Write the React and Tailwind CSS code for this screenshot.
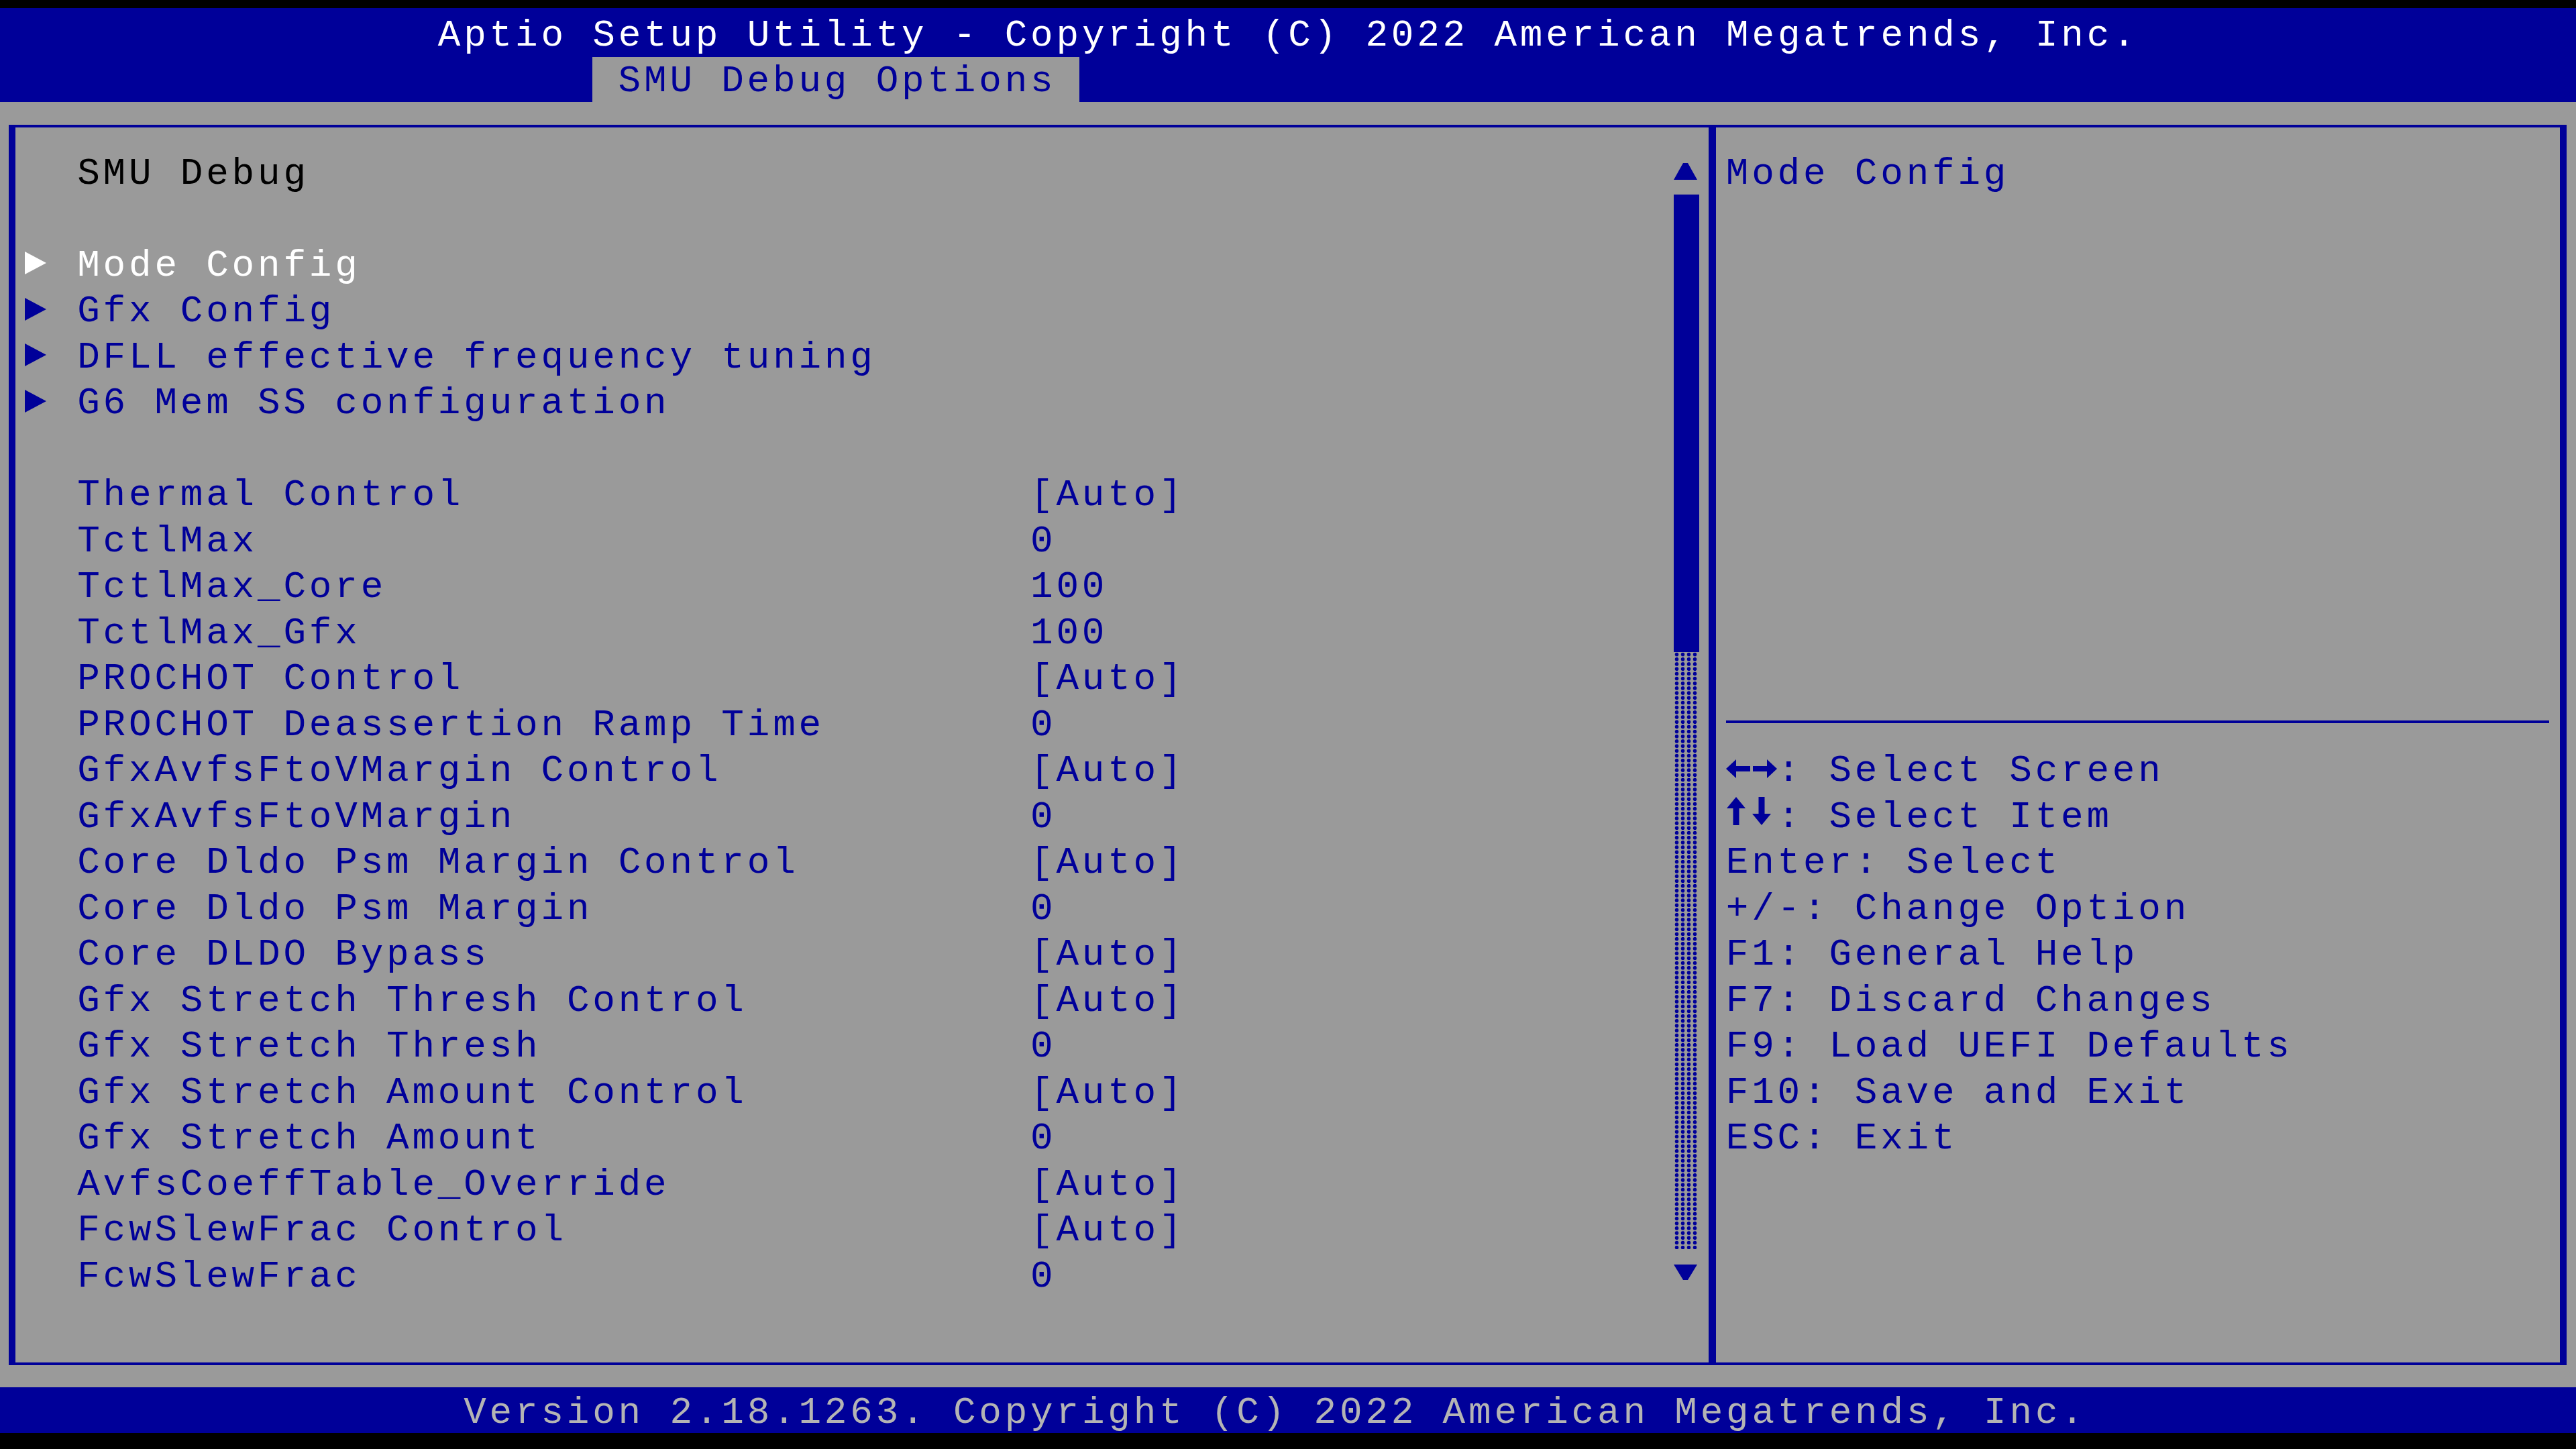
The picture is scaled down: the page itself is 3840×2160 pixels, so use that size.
const BLUE = '#000099';

const submenus = ['Mode Config', 'Gfx Config', 'DFLL effective frequency tuning', 'G6 Mem SS configuration'];

const settings = [
  ['Thermal Control', '[Auto]'],
  ['TctlMax', '0'],
  ['TctlMax_Core', '100'],
  ['TctlMax_Gfx', '100'],
  ['PROCHOT Control', '[Auto]'],
  ['PROCHOT Deassertion Ramp Time', '0'],
  ['GfxAvfsFtoVMargin Control', '[Auto]'],
  ['GfxAvfsFtoVMargin', '0'],
  ['Core Dldo Psm Margin Control', '[Auto]'],
  ['Core Dldo Psm Margin', '0'],
  ['Core DLDO Bypass', '[Auto]'],
  ['Gfx Stretch Thresh Control', '[Auto]'],
  ['Gfx Stretch Thresh', '0'],
  ['Gfx Stretch Amount Control', '[Auto]'],
  ['Gfx Stretch Amount', '0'],
  ['AvfsCoeffTable_Override', '[Auto]'],
  ['FcwSlewFrac Control', '[Auto]'],
  ['FcwSlewFrac', '0'],
];

const helpKeys = [
  ['Enter:', 'Select'],
  ['+/-:', 'Change Option'],
  ['F1:', 'General Help'],
  ['F7:', 'Discard Changes'],
  ['F9:', 'Load UEFI Defaults'],
  ['F10:', 'Save and Exit'],
  ['ESC:', 'Exit'],
];

function Pointer({ selected }) {
  return (
    <svg width="32" height="34" viewBox="0 0 32 34" className="mb-[7px]">
      <polygon points="0,0 32,17 0,34" fill={selected ? '#ffffff' : BLUE} />
    </svg>
  );
}

function MenuRow({ label, value, submenu, selected, dark }) {
  const color = selected ? 'text-white' : dark ? 'text-black' : 'text-[#000099]';
  return (
    <div className={`flex items-center h-[68.5px] leading-[68.5px] ${color}`}>
      <div className="w-[92.2px] shrink-0 flex items-center pl-[14px]">
        {submenu && <Pointer selected={selected} />}
      </div>
      <span className="w-[1420.8px] shrink-0 whitespace-pre">{label}</span>
      {value && <span>{value}</span>}
    </div>
  );
}

function ScrollBar() {
  return (
    <div className="w-[40px] shrink-0 mr-[12px] pt-[27.5px] flex flex-col items-start">
      <div className="h-[68.5px] pt-[25.5px]">
        <svg width="35" height="25" viewBox="0 0 35 25">
          <polygon points="14,0 21,0 35,25 0,25" fill={BLUE} />
        </svg>
      </div>
      <div className="mt-[4px] h-[682px] w-[38px] bg-[#000099]" />
      <div className="h-[890px] w-[36px] bg-[radial-gradient(circle,#000099_45%,transparent_55%)] bg-[length:9px_7.2px]" />
      <div className="mt-[23px]">
        <svg width="35" height="23" viewBox="0 0 35 23">
          <polygon points="0,0 35,0 21,23 14,23" fill={BLUE} />
        </svg>
      </div>
    </div>
  );
}

function HelpRow({ icon, keyText, text }) {
  return (
    <div className="flex items-center h-[68.5px] leading-[68.5px] text-[#000099] whitespace-pre">
      {icon}
      <span>{keyText}</span>
      <span className="ml-[38.4px]">{text}</span>
    </div>
  );
}

const leftRight = (
  <svg width="76.8" height="30" viewBox="0 0 76.8 30" className="mb-[7px] shrink-0">
    <polygon points="0,15 15,1 15,29" fill={BLUE} />
    <rect x="13" y="11" width="23" height="8" fill={BLUE} />
    <rect x="40" y="11" width="23" height="8" fill={BLUE} />
    <polygon points="61,1 76,15 61,29" fill={BLUE} />
  </svg>
);

const upDown = (
  <svg width="76.8" height="42" viewBox="0 0 76.8 42" className="mb-[18px] shrink-0">
    <polygon points="1,17 15,0 29,17" fill={BLUE} />
    <rect x="10.5" y="15" width="9" height="27" fill={BLUE} />
    <rect x="48.5" y="0" width="9" height="27" fill={BLUE} />
    <polygon points="39,25 53,42 67,25" fill={BLUE} />
  </svg>
);

export default function App() {
  return (
    <div className="w-[3840px] h-[2160px] bg-black overflow-hidden font-['Liberation_Mono',monospace] text-[56px] tracking-[4.8px]">
      <div className="h-[12px]" />

      {/* title bar with the active tab */}
      <div className="h-[140px] bg-[#000099]">
        <div className="h-[73px] pt-[13px] pl-[652.8px] leading-[56px] text-white whitespace-pre">
          Aptio Setup Utility - Copyright (C) 2022 American Megatrends, Inc.
        </div>
        <div className="h-[67px] flex">
          <div className="ml-[883.2px] w-[726px] h-full bg-[#9a9a9a] pt-[8px] pl-[38.4px] leading-[56px] text-[#000099] whitespace-pre">
            SMU Debug Options
          </div>
        </div>
      </div>

      {/* main frame */}
      <div className="h-[1916px] bg-[#9a9a9a] pt-[34px] pl-[13px] pr-[14px] pb-[33px]">
        <div className="h-full flex border-x-[10px] border-y-4 border-[#000099]">
          <div className="w-[2524px] shrink-0 flex">
            <div className="flex-1 pt-[34.5px]">
              <MenuRow label="SMU Debug" dark />
              <div className="h-[68.5px]" />
              {submenus.map((s, i) => (
                <MenuRow key={s} label={s} submenu selected={i === 0} />
              ))}
              <div className="h-[68.5px]" />
              {settings.map(([label, value]) => (
                <MenuRow key={label} label={label} value={value} />
              ))}
            </div>
            <ScrollBar />
          </div>

          <div className="w-[11px] shrink-0 bg-[#000099]" />

          {/* help pane */}
          <div className="flex-1 pl-[14.8px] pt-[34.5px]">
            <div className="h-[68.5px] leading-[68.5px] text-[#000099] whitespace-pre">Mode Config</div>
            <div className="h-[756.5px]" />
            <div className="h-[65.5px] pt-[24.5px] pr-[16px]">
              <div className="h-[4px] bg-[#000099]" />
            </div>
            <HelpRow icon={leftRight} keyText=":" text="Select Screen" />
            <HelpRow icon={upDown} keyText=":" text="Select Item" />
            {helpKeys.map(([k, t]) => (
              <HelpRow key={k} keyText={k} text={t} />
            ))}
          </div>
        </div>
      </div>

      {/* version footer */}
      <div className="h-[68px] bg-[#000099] pt-[9.5px] pl-[691.2px] leading-[56px] text-[#b4b4b4] whitespace-pre">
        Version 2.18.1263. Copyright (C) 2022 American Megatrends, Inc.
      </div>
    </div>
  );
}
